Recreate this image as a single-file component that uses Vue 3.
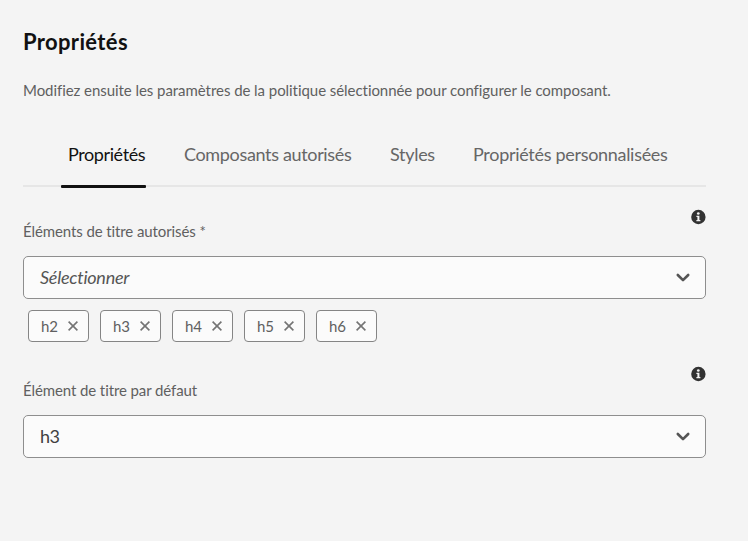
<script setup>
import { ref } from 'vue'

const tabs = [
  { label: 'Propriétés', key: 'props' },
  { label: 'Composants autorisés', key: 'components' },
  { label: 'Styles', key: 'styles' },
  { label: 'Propriétés personnalisées', key: 'custom' },
]
const active = ref('props')
const tags = ref(['h2', 'h3', 'h4', 'h5', 'h6'])
const remove = (tag) => {
  tags.value = tags.value.filter((t) => t !== tag)
}
</script>

<template>
  <main class="panel">
    <h1 class="title">Propriétés</h1>
    <p class="intro">Modifiez ensuite les paramètres de la politique sélectionnée pour configurer le composant.</p>

    <nav class="tabs">
      <button
        v-for="tab in tabs"
        :key="tab.key"
        :class="['tab', tab.key, { active: active === tab.key }]"
        @click="active = tab.key"
      >{{ tab.label }}</button>
    </nav>

    <section class="field">
      <div class="label-row">
        <span class="label">Éléments de titre autorisés *</span>
        <svg class="info" viewBox="0 0 16 16">
          <circle cx="8.4" cy="8" r="7.2" fill="#323232" />
          <circle cx="8.3" cy="4.5" r="1.35" fill="#f4f4f4" />
          <path d="M6.4 6.8h3v4.2h1v1.3h-4V11h1V8.100h-1z" fill="#f4f4f4" />
        </svg>
      </div>
      <div class="select">
        <span class="placeholder">Sélectionner</span>
        <svg class="chevron" viewBox="0 0 16 11"><path d="M2.800 3 8 8.200 13.200 3" /></svg>
      </div>
      <div class="tags">
        <span v-for="tag in tags" :key="tag" class="tag">
          <span>{{ tag }}</span>
          <svg class="close" viewBox="0 0 10 10" @click="remove(tag)"><path d="M.6.6l8.800 8.800M9.400.6L.6 9.400" /></svg>
        </span>
      </div>
    </section>

    <section class="field second">
      <div class="label-row">
        <span class="label">Élément de titre par défaut</span>
        <svg class="info" viewBox="0 0 16 16">
          <circle cx="8.4" cy="8" r="7.2" fill="#323232" />
          <circle cx="8.3" cy="4.5" r="1.35" fill="#f4f4f4" />
          <path d="M6.4 6.8h3v4.2h1v1.3h-4V11h1V8.100h-1z" fill="#f4f4f4" />
        </svg>
      </div>
      <div class="select">
        <span class="value">h3</span>
        <svg class="chevron" viewBox="0 0 16 11"><path d="M2.800 3 8 8.200 13.200 3" /></svg>
      </div>
    </section>
  </main>
</template>

<style>
body { background: #f4f4f4; }
</style>

<style scoped>
.panel {
  box-sizing: border-box;
  height: 541px;
  padding: 28px 42px 0 23px;
  background: #f4f4f4;
  color: #606060;
  font-family: Lato, "Noto Sans", sans-serif;
  font-size: 15px;
  font-variant-ligatures: none;
  white-space: nowrap;
}
.title {
  margin: 0;
  color: #111;
  font-size: 22px;
  font-weight: 700;
  line-height: 28px;
  letter-spacing: 0.35px;
}
.intro {
  margin: 24px 0 0;
  line-height: 20px;
  letter-spacing: -0.055px;
}
.tabs {
  display: flex;
  gap: 31px;
  box-sizing: border-box;
  height: 45px;
  margin-top: 42px;
  padding-left: 38px;
  box-shadow: inset 0 -2px #e6e6e6;
}
.tab {
  position: relative;
  flex: none;
  box-sizing: border-box;
  height: 45px;
  padding: 0 0 21px 7px;
  border: 0;
  background: none;
  color: #666;
  font-family: inherit;
  font-size: 18px;
  line-height: 24px;
  letter-spacing: -0.3px;
  text-align: left;
}
.tab.active { color: #111; }
.tab.active::after {
  content: "";
  position: absolute;
  left: 0;
  right: 0;
  bottom: -1px;
  height: 3px;
  border-radius: 1px;
  background: #111;
}
.props { width: 85px; letter-spacing: -0.4px; }
.components { width: 175px; letter-spacing: -0.34px; }
.styles { width: 52px; }
.field { padding-top: 22px; }
.label-row {
  display: flex;
  justify-content: space-between;
  height: 47px;
}
.label {
  padding-top: 12px;
  line-height: 20px;
  letter-spacing: -0.1px;
}
.info {
  width: 16px;
  height: 16px;
}
.select {
  display: flex;
  align-items: center;
  justify-content: space-between;
  box-sizing: border-box;
  height: 43px;
  padding: 0 14px 0 16px;
  border: 1px solid #8e8e8e;
  border-radius: 5px;
  background: #fbfbfb;
  font-size: 18px;
  line-height: 20px;
}
.select > span { padding-bottom: 1px; }
.placeholder {
  color: #555;
  font-style: italic;
  letter-spacing: -0.25px;
}
.value {
  color: #404040;
  letter-spacing: -0.6px;
}
.chevron {
  width: 16px;
  height: 11px;
  fill: none;
  stroke: #555;
  stroke-width: 2.600;
  stroke-linecap: round;
  stroke-linejoin: round;
}
.tags {
  display: flex;
  gap: 11px;
  padding: 11px 0 0 5px;
}
.tag {
  display: flex;
  align-items: center;
  justify-content: space-between;
  box-sizing: border-box;
  width: 61px;
  height: 32px;
  padding: 0 10px 0 12px;
  border: 1px solid #858585;
  border-radius: 4px;
  background: #fbfbfb;
  letter-spacing: -0.2px;
}
.close {
  width: 10px;
  height: 10px;
  fill: none;
  stroke: #747474;
  stroke-width: 1.600;
}
.second { padding-top: 24px; }
.second .label-row { height: 49px; }
.second .label { padding-top: 14px; }
</style>
